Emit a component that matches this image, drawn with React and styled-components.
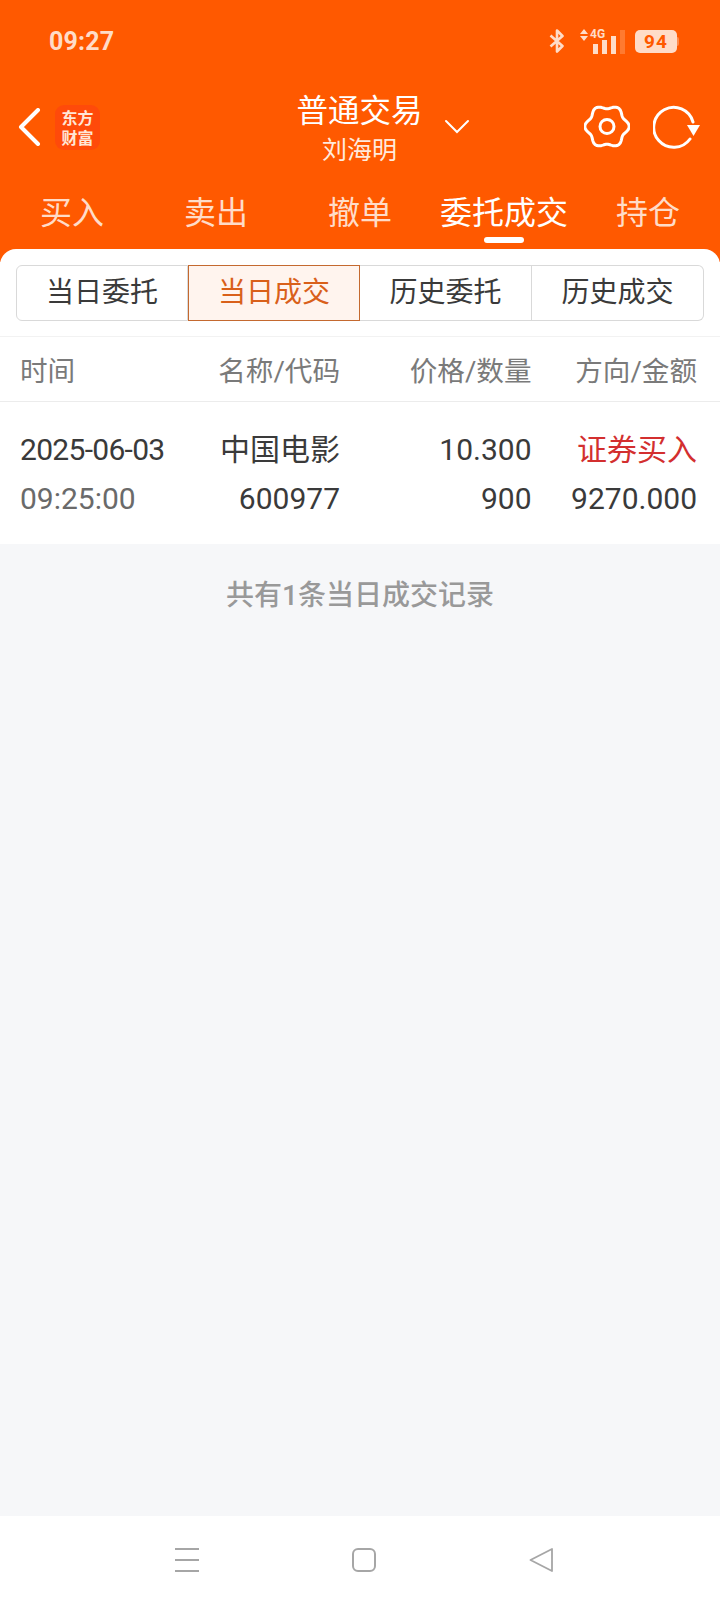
import React from "react";
import styled, { createGlobalStyle } from "styled-components";

const Global = createGlobalStyle`
  html, body { margin: 0; padding: 0; background: #f6f7f9; }
  body { font-family: Roboto, "Noto Sans CJK SC", sans-serif; }
`;

// Six soft lobes traced in polar form for the settings cog.
const cogPath = (() => {
  const pts = [];
  for (let i = 0; i < 120; i += 1) {
    const t = (i / 120) * Math.PI * 2;
    const r = 19.6 + 1.9 * Math.cos(6 * t);
    pts.push(`${(23 + r * Math.cos(t) * 1.03).toFixed(2)} ${(21.5 + r * Math.sin(t)).toFixed(2)}`);
  }
  return `M${pts.join("L")}Z`;
})();

const Page = styled.div`
  width: 720px;
  height: 1604px;
  display: flex;
  flex-direction: column;
  background: #f6f7f9;
  overflow: hidden;
`;

const Top = styled.header`
  background: #ff5900;
  height: 262px;
  margin-bottom: -13px;
  flex: none;
`;

const StatusBar = styled.div`
  height: 82px;
  display: flex;
  align-items: center;
  padding: 0 43px 0 49px;
  box-sizing: border-box;
  justify-content: space-between;
  color: #ffdcc8;
`;

const Clock = styled.span`
  font: 700 25px/1 Roboto, sans-serif;
  letter-spacing: 0.2px;
`;

const StatusIcons = styled.div`
  display: flex;
  align-items: center;
`;

const Signal = styled.div`
  display: flex;
  align-items: flex-end;
  position: relative;
  width: 44px;
  height: 25px;
  margin: 0 11px 0 15px;
  gap: 4px;
  padding-left: 13px;
  box-sizing: border-box;
`;

const SignalLabel = styled.span`
  position: absolute;
  left: 10px;
  top: -1px;
  font: 700 12px/1 Roboto, sans-serif;
`;

const SignalArrows = styled.svg`
  position: absolute;
  left: 0;
  top: 0;
`;

const Bar = styled.i`
  display: block;
  flex: none;
  width: 5px;
  height: ${(p) => p.$h}px;
  background: ${(p) => (p.$dim ? "#ff7a30" : "#ffdcc8")};
`;

const Battery = styled.div`
  position: relative;
  width: 42px;
  height: 23px;
  border-radius: 5px;
  background: #ffdcc8;
  color: #ff5900;
  font: 700 19px/23px Roboto, sans-serif;
  letter-spacing: 1px;
  text-align: center;

  &::after {
    content: "";
    position: absolute;
    right: -2px;
    top: 7px;
    width: 2px;
    height: 9px;
    border-radius: 0 2px 2px 0;
    background: #ff8a4d;
  }
`;

const NavRow = styled.div`
  height: 90px;
  display: grid;
  grid-template-columns: 1fr auto 1fr;
  align-items: center;
  padding: 0 19px 0 18px;
`;

const NavLeft = styled.div`
  display: flex;
  align-items: center;
  gap: 13px;
`;

const Logo = styled.div`
  width: 45px;
  height: 45px;
  border-radius: 9px;
  background: #ff4a0a;
  color: #ffe6d6;
  font: 700 16px/20px "Noto Sans CJK SC", sans-serif;
  text-align: center;
  display: flex;
  flex-direction: column;
  justify-content: center;
`;

const TitleBlock = styled.div`
  color: #fff;
  text-align: center;
  margin-top: 6px;
`;

const Title = styled.div`
  font-size: 31.5px;
  line-height: 38px;
`;

const Account = styled.div`
  font-size: 25px;
  line-height: 34px;
  margin-top: 3px;
  color: #ffeadd;
`;

const NavRight = styled.div`
  display: flex;
  align-items: center;
  justify-content: flex-end;
  gap: 23px;
`;

const Chevron = styled.svg`
  margin-right: auto;
  margin-left: 21px;
  margin-top: 0;
`;

const Tabs = styled.nav`
  display: grid;
  grid-template-columns: repeat(5, 144px);
`;

const Tab = styled.div`
  position: relative;
  height: 90px;
  padding-top: 18px;
  box-sizing: border-box;
  text-align: center;
  font-size: 32px;
  line-height: 46px;
  color: ${(p) => (p.$on ? "#fff" : "#ffdcc8")};

  ${(p) =>
    p.$on &&
    `&::after {
      content: "";
      position: absolute;
      left: 52px;
      top: 65px;
      width: 40px;
      height: 6px;
      border-radius: 3px;
      background: #fff;
    }`}
`;

const Panel = styled.main`
  position: relative;
  background: #fff;
  border-radius: 16px 16px 0 0;
  flex: none;
`;

const SegmentBar = styled.div`
  display: grid;
  grid-template-columns: repeat(4, 172px);
  padding: 16px;
  height: 88px;
  box-sizing: border-box;
  border-bottom: 1px solid #f2f2f2;
`;

const Segment = styled.div`
  height: 56px;
  box-sizing: border-box;
  border: 1px solid ${(p) => (p.$on ? "#c4692f" : "#d9d9d9")};
  border-left-width: ${(p) => (p.$first || p.$on ? 1 : 0)}px;
  border-radius: ${(p) => (p.$first ? "6px 0 0 6px" : p.$last ? "0 6px 6px 0" : "0")};
  background: ${(p) => (p.$on ? "#fff4ee" : "#fff")};
  color: ${(p) => (p.$on ? "#d9601a" : "#3a3a3a")};
  font-size: 28px;
  line-height: 54px;
  text-align: center;
`;

const Row = styled.div`
  display: grid;
  grid-template-columns: 170px 150px 191.5px 165.5px;
  padding: 0 23px 0 20px;
  align-items: center;
`;

const HeadRow = styled(Row)`
  height: 64px;
  border-bottom: 1px solid #ececec;
  color: #7a7a7a;
  font-size: 27.6px;
`;

const Cell = styled.div`
  text-align: ${(p) => (p.$left ? "left" : "right")};
  white-space: nowrap;
`;

const DataRow = styled(Row)`
  height: 142px;
  box-sizing: border-box;
  padding-top: 2px;
  align-content: center;
  row-gap: 10px;
  font-size: 30px;
  line-height: 39px;
  color: #3a3a3a;
`;

const DateCell = styled(Cell)`
  letter-spacing: -0.7px;
`;

const Time = styled(Cell)`
  color: #6a6a6a;
`;

const Direction = styled(Cell)`
  color: #d32f2f;
`;

const Footnote = styled.div`
  text-align: center;
  color: #999;
  font-size: 28px;
  font-weight: 500;
  line-height: 38px;
  padding-top: 33px;
`;

const Spacer = styled.div`
  flex: 1;
`;

const SystemNav = styled.footer`
  height: 88px;
  background: #fff;
  flex: none;
  display: grid;
  grid-template-columns: repeat(3, 1fr);
  padding: 0 90px 0 98px;
  align-items: center;
  justify-items: center;
`;

export default function App() {
  return (
    <Page>
      <Global />
      <Top>
        <StatusBar>
          <Clock>09:27</Clock>
          <StatusIcons>
            <svg width="16" height="24" viewBox="0 0 16 24" fill="none" stroke="currentColor" strokeWidth="2.6" strokeLinejoin="round">
              <path d="M1.500 6.500L13.500 17 8 22.500V1.500L13.500 7 1.500 17.500" />
            </svg>
            <Signal>
              <SignalArrows width="8" height="12" viewBox="0 0 8 12" fill="currentColor">
                <path d="M4 0l4 5H0zM4 12l4-5H0z" />
              </SignalArrows>
              <SignalLabel>4G</SignalLabel>
              <Bar $h={10} />
              <Bar $h={14} />
              <Bar $h={18} />
              <Bar $h={24} $dim />
            </Signal>
            <Battery>94</Battery>
          </StatusIcons>
        </StatusBar>
        <NavRow>
          <NavLeft>
            <svg width="24" height="38" viewBox="0 0 24 38" fill="none" stroke="#fff" strokeWidth="4" strokeLinecap="round" strokeLinejoin="round">
              <path d="M20 2L3 19l17 17" />
            </svg>
            <Logo>
              <span>东方</span>
              <span>财富</span>
            </Logo>
          </NavLeft>
          <TitleBlock>
            <Title>普通交易</Title>
            <Account>刘海明</Account>
          </TitleBlock>
          <NavRight>
            <Chevron width="26" height="16" viewBox="0 0 26 16" fill="none" stroke="#fff" strokeWidth="2" strokeLinecap="round">
              <path d="M2 2l11 11L24 2" />
            </Chevron>
            <svg width="46" height="44" viewBox="0 0 46 44" fill="none" stroke="#fff" strokeWidth="3" strokeLinejoin="round">
              <path d={cogPath} />
              <circle cx="23" cy="21.500" r="7" />
            </svg>
            <svg width="48" height="44" viewBox="0 0 48 44" fill="none">
              <path d="M37 34A20 20 0 1 1 40 17" stroke="#fff" strokeWidth="3" strokeLinecap="round" />
              <path d="M34 20h13l-6.500 11z" fill="#fff" />
            </svg>
          </NavRight>
        </NavRow>
        <Tabs>
          <Tab>买入</Tab>
          <Tab>卖出</Tab>
          <Tab>撤单</Tab>
          <Tab $on>委托成交</Tab>
          <Tab>持仓</Tab>
        </Tabs>
      </Top>
      <Panel>
        <SegmentBar>
          <Segment $first>当日委托</Segment>
          <Segment $on>当日成交</Segment>
          <Segment>历史委托</Segment>
          <Segment $last>历史成交</Segment>
        </SegmentBar>
        <HeadRow>
          <Cell $left>时间</Cell>
          <Cell>名称/代码</Cell>
          <Cell>价格/数量</Cell>
          <Cell>方向/金额</Cell>
        </HeadRow>
        <DataRow>
          <DateCell $left>2025-06-03</DateCell>
          <Cell>中国电影</Cell>
          <Cell>10.300</Cell>
          <Direction>证券买入</Direction>
          <Time $left>09:25:00</Time>
          <Cell>600977</Cell>
          <Cell>900</Cell>
          <Cell>9270.000</Cell>
        </DataRow>
      </Panel>
      <Footnote>共有1条当日成交记录</Footnote>
      <Spacer />
      <SystemNav>
        <svg width="24" height="24" viewBox="0 0 24 24" fill="#a6a6a6">
          <rect y="0" width="24" height="2" />
          <rect y="11" width="24" height="2" />
          <rect y="22" width="24" height="2" />
        </svg>
        <svg width="24" height="24" viewBox="0 0 24 24" fill="none" stroke="#a6a6a6" strokeWidth="2">
          <rect x="1" y="1" width="22" height="22" rx="5" />
        </svg>
        <svg width="24" height="24" viewBox="0 0 24 24" fill="none" stroke="#a6a6a6" strokeWidth="1.800" strokeLinejoin="round">
          <path d="M1.500 12L23 1v22z" />
        </svg>
      </SystemNav>
    </Page>
  );
}
